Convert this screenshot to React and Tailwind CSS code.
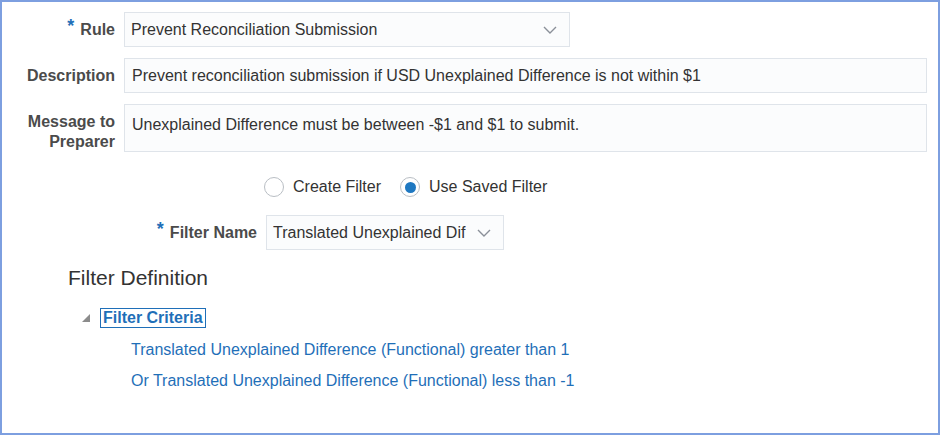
import React, { useState } from 'react';

const font = { fontFamily: '"Liberation Sans", Arial, sans-serif' };

const Chevron = () => (
  <svg width="14" height="8" viewBox="0 0 14 8" className="shrink-0">
    <path d="M1 1l6 6 6-6" fill="none" stroke="#8a9099" strokeWidth="1.4" />
  </svg>
);

const Label = ({ required, children, className = '' }) => (
  <div className={`text-right font-bold text-[16px] leading-[20px] text-[#4b4b4b] ${className}`}>
    {required && <span className="text-[#1f6fb8] text-[18px] mr-[6px] relative top-[-3px]">*</span>}
    {children}
  </div>
);

const Radio = ({ checked, label, onClick }) => (
  <label className="flex items-center gap-[9px] cursor-pointer" onClick={onClick}>
    <span className="w-[20px] h-[20px] rounded-full border border-[#b9bec4] bg-white flex items-center justify-center">
      {checked && <span className="w-[11px] h-[11px] rounded-full bg-[#1f78c1]" />}
    </span>
    <span className="text-[16px] text-[#333]">{label}</span>
  </label>
);

export default function App() {
  const [mode, setMode] = useState('saved');

  return (
    <div style={font} className="w-[940px] h-[435px] border-2 border-[#7d9fe0] bg-white overflow-hidden">
      <div className="flex items-center mt-[10px]">
        <Label required className="w-[113px]">Rule</Label>
        <div className="ml-[9px] w-[446px] h-[35px] border border-[#dfe4ea] bg-[#fbfcfd] flex items-center justify-between pl-[6px] pr-[12px]">
          <span className="text-[16px] text-[#333]">Prevent Reconciliation Submission</span>
          <Chevron />
        </div>
      </div>

      <div className="flex items-center mt-[11px]">
        <Label className="w-[113px]">Description</Label>
        <div className="ml-[9px] w-[803px] h-[35px] border border-[#dfe4ea] bg-[#fbfcfd] flex items-center pl-[7px]">
          <span className="text-[16px] text-[#333]">Prevent reconciliation submission if USD Unexplained Difference is not within $1</span>
        </div>
      </div>

      <div className="flex items-start mt-[11px]">
        <Label className="w-[113px] pt-[8px]">
          Message to
          <br />
          Preparer
        </Label>
        <div className="ml-[9px] w-[803px] h-[48px] border border-[#dfe4ea] bg-[#fbfcfd] pl-[7px] pt-[8px]">
          <span className="text-[16px] text-[#333]">Unexplained Difference must be between -$1 and $1 to submit.</span>
        </div>
      </div>

      <div className="flex items-center gap-[19px] ml-[262px] mt-[23px]">
        <Radio checked={mode === 'create'} label="Create Filter" onClick={() => setMode('create')} />
        <Radio checked={mode === 'saved'} label="Use Saved Filter" onClick={() => setMode('saved')} />
      </div>

      <div className="flex items-center mt-[16px]">
        <Label required className="w-[255px]">Filter Name</Label>
        <div className="ml-[9px] w-[238px] h-[35px] border border-[#dfe4ea] bg-[#fbfcfd] flex items-center justify-between pl-[6px] pr-[12px]">
          <span className="text-[16px] text-[#333] w-[193px] overflow-hidden whitespace-nowrap">Translated Unexplained Dif</span>
          <Chevron />
        </div>
      </div>

      <div className="ml-[66px] mt-[15px] text-[21px] leading-[26px] text-[#333]">Filter Definition</div>

      <div className="flex items-center ml-[79px] mt-[17px]">
        <svg width="10" height="10" viewBox="0 0 10 10">
          <path d="M9 1v8H1z" fill="#8c8c8c" />
        </svg>
        <span className="ml-[9px] px-[2px] border border-[#1f6fb8] text-[16px] leading-[18px] font-bold text-[#1f6fb8]">Filter Criteria</span>
      </div>

      <div className="ml-[129px] mt-[12px] flex flex-col gap-[12px] text-[16px] leading-[19px] text-[#1f6fb8]">
        <span>Translated Unexplained Difference (Functional) greater than 1</span>
        <span>Or Translated Unexplained Difference (Functional) less than -1</span>
      </div>
    </div>
  );
}
